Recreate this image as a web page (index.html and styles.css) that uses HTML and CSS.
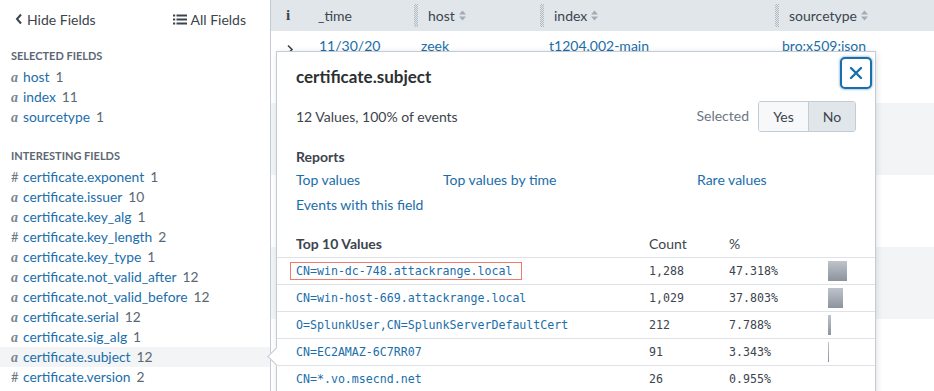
FILE: index.html
```html
<!DOCTYPE html>
<html lang="en">
<head>
  <meta charset="UTF-8" />
  <title>Search - Fields</title>
  <link rel="stylesheet" href="styles.css">
</head>
<body>
  <div class="app">
    <aside class="sidebar">
      <div class="side-top">
        <a class="side-link">
          <svg width="8" height="12" viewBox="0 0 8 12"><polyline points="6,1.5 2,6 6,10.5" fill="none" stroke="#3c444d" stroke-width="2"/></svg>
          Hide Fields
        </a>
        <a class="side-link">
          <svg width="14" height="11" viewBox="0 0 14 11"><rect x="0" y="0.5" width="2.2" height="2" fill="#3c444d"/><rect x="3.5" y="0.5" width="10.5" height="2" fill="#3c444d"/><rect x="0" y="4.5" width="2.2" height="2" fill="#3c444d"/><rect x="3.5" y="4.5" width="10.5" height="2" fill="#3c444d"/><rect x="0" y="8.5" width="2.2" height="2" fill="#3c444d"/><rect x="3.5" y="8.5" width="10.5" height="2" fill="#3c444d"/></svg>
          All Fields
        </a>
      </div>

      <h3 class="side-heading">Selected Fields</h3>
      <ul class="field-list">
        <li><span class="ftype str">a</span><a>host</a><span class="fcount">1</span></li>
        <li><span class="ftype str">a</span><a>index</a><span class="fcount">11</span></li>
        <li><span class="ftype str">a</span><a>sourcetype</a><span class="fcount">1</span></li>
      </ul>

      <h3 class="side-heading interesting">Interesting Fields</h3>
      <ul class="field-list">
        <li><span class="ftype">#</span><a>certificate.exponent</a><span class="fcount">1</span></li>
        <li><span class="ftype str">a</span><a>certificate.issuer</a><span class="fcount">10</span></li>
        <li><span class="ftype str">a</span><a>certificate.key_alg</a><span class="fcount">1</span></li>
        <li><span class="ftype">#</span><a>certificate.key_length</a><span class="fcount">2</span></li>
        <li><span class="ftype str">a</span><a>certificate.key_type</a><span class="fcount">1</span></li>
        <li><span class="ftype str">a</span><a>certificate.not_valid_after</a><span class="fcount">12</span></li>
        <li><span class="ftype str">a</span><a>certificate.not_valid_before</a><span class="fcount">12</span></li>
        <li><span class="ftype str">a</span><a>certificate.serial</a><span class="fcount">12</span></li>
        <li><span class="ftype str">a</span><a>certificate.sig_alg</a><span class="fcount">1</span></li>
        <li class="active"><span class="ftype str">a</span><a>certificate.subject</a><span class="fcount">12</span></li>
        <li><span class="ftype">#</span><a>certificate.version</a><span class="fcount">2</span></li>
      </ul>
    </aside>

    <main class="events">
      <div class="ev-head">
        <div class="hcell first">i</div>
        <div class="hcell time">_time</div>
        <div class="hcell"><span class="grip"></span><span class="htext">host</span>
          <svg class="sort" width="7" height="11" viewBox="0 0 7 11"><path d="M3.5 0.5 L7 4.5 L0 4.5 Z M3.5 10.5 L7 6.5 L0 6.5 Z" fill="#a3abb4"/></svg></div>
        <div class="hcell"><span class="grip"></span><span class="htext">index</span>
          <svg class="sort" width="7" height="11" viewBox="0 0 7 11"><path d="M3.5 0.5 L7 4.5 L0 4.5 Z M3.5 10.5 L7 6.5 L0 6.5 Z" fill="#a3abb4"/></svg></div>
        <div class="hcell"><span class="grip"></span><span class="htext">sourcetype</span>
          <svg class="sort" width="7" height="11" viewBox="0 0 7 11"><path d="M3.5 0.5 L7 4.5 L0 4.5 Z M3.5 10.5 L7 6.5 L0 6.5 Z" fill="#a3abb4"/></svg></div>
      </div>

      <div class="ev-body">
        <div class="ev-row">
          <div class="cell first">
            <svg width="8" height="11" viewBox="0 0 8 11"><polyline points="2,1.5 6,5.5 2,9.5" fill="none" stroke="#3c444d" stroke-width="1.6"/></svg>
          </div>
          <div class="cell"><a>11/30/20</a></div>
          <div class="cell"><a>zeek</a></div>
          <div class="cell idx"><a>t1204.002-main</a></div>
          <div class="cell"><a>bro:x509:json</a></div>
        </div>
        <div class="ev-row"></div>
        <div class="ev-row"></div>
        <div class="ev-row"></div>
        <div class="ev-row"></div>
      </div>

      <div class="popup">
        <span class="popup-arrow"></span>
        <div class="popup-head">
          <h2 class="popup-title">certificate.subject</h2>
          <button class="close-btn">
            <svg width="14" height="14" viewBox="0 0 14 14"><path d="M2 2 L12 12 M12 2 L2 12" stroke="#1a6eaa" stroke-width="2.4" stroke-linecap="round"/></svg>
          </button>
        </div>

        <div class="summary">
          <span>12 Values, 100% of events</span>
          <div class="selected">
            <span class="sel-label">Selected</span>
            <div class="toggle">
              <button class="tog yes">Yes</button>
              <button class="tog no">No</button>
            </div>
          </div>
        </div>

        <div class="reports">
          <h4>Reports</h4>
          <div class="report-links">
            <a>Top values</a>
            <a>Top values by time</a>
            <a>Rare values</a>
            <a>Events with this field</a>
          </div>
        </div>

        <table class="top-values">
          <thead>
            <tr><th class="val">Top 10 Values</th><th>Count</th><th>%</th><th></th></tr>
          </thead>
          <tbody>
            <tr><td class="val"><a class="marked">CN=win-dc-748.attackrange.local</a></td><td>1,288</td><td>47.318%</td><td><div class="bar" style="width: 19px"></div></td></tr>
            <tr><td class="val"><a>CN=win-host-669.attackrange.local</a></td><td>1,029</td><td>37.803%</td><td><div class="bar" style="width: 15px"></div></td></tr>
            <tr><td class="val"><a>O=SplunkUser,CN=SplunkServerDefaultCert</a></td><td>212</td><td>7.788%</td><td><div class="bar" style="width: 3px"></div></td></tr>
            <tr><td class="val"><a>CN=EC2AMAZ-6C7RR07</a></td><td>91</td><td>3.343%</td><td><div class="bar" style="width: 1px"></div></td></tr>
            <tr><td class="val"><a>CN=*.vo.msecnd.net</a></td><td>26</td><td>0.955%</td><td><div class="bar" style="width: 0px"></div></td></tr>
          </tbody>
        </table>
      </div>
    </main>
  </div>
</body>
</html>
```

FILE: styles.css
```css
* {
  box-sizing: border-box;
  margin: 0;
  padding: 0;
}

body {
  font-family: Lato, 'Open Sans', sans-serif;
  font-size: 14px;
  color: #3c444d;
  background: white;
  overflow: hidden;
  height: 391px;
}

a {
  color: #1a6eaa;
  text-decoration: none;
}

.app {
  display: flex;
  height: 391px;
}

/* sidebar */
.sidebar {
  width: 271px;
  flex-shrink: 0;
  border-right: 1px solid #c3cbd4;
}

.side-top {
  height: 38px;
  display: flex;
  align-items: center;
  justify-content: space-between;
  padding: 0 24px 0 15px;
}

.side-link {
  display: flex;
  align-items: center;
  gap: 4px;
  color: #3c444d;
  font-size: 14px;
}

.side-heading {
  font-size: 11px;
  font-weight: bold;
  text-transform: uppercase;
  color: #5c6773;
  line-height: 20px;
  margin-top: 8px;
  padding-left: 11px;
}

.side-heading.interesting {
  margin-top: 19px;
}

.field-list {
  list-style: none;
  margin-top: 1px;
}

.field-list li {
  display: flex;
  align-items: baseline;
  height: 20px;
  line-height: 20px;
  padding-left: 11px;
  font-size: 13.8px;
}

.field-list li.active {
  background: #f2f4f5;
}

.ftype {
  width: 12px;
  color: #6b7785;
  font-size: 13px;
}

.ftype.str {
  font-family: 'Liberation Serif', serif;
  font-style: italic;
  font-weight: bold;
  font-size: 14px;
  color: #7a8591;
}

.fcount {
  margin-left: 6px;
  color: #5c6773;
}

/* events table */
.events {
  flex: 1;
  position: relative;
}

.ev-head,
.ev-row {
  display: grid;
  grid-template-columns: 39px 102px 126px 235px 1fr;
}

.ev-head {
  height: 31px;
  background: #e1e6eb;
  align-items: center;
}

.hcell {
  display: flex;
  align-items: center;
}

.hcell.first {
  padding-left: 15px;
  font-family: 'Liberation Serif', serif;
  font-weight: bold;
  font-size: 15px;
}

.hcell.time {
  padding-left: 8px;
}

.grip {
  width: 4px;
  height: 23px;
  margin-left: 2px;
  background: repeating-conic-gradient(#b3bac2 0 25%, transparent 0 50%) 0 0 / 2px 2px;
}

.htext {
  margin-left: 10px;
}

.sort {
  margin-left: 4px;
}

.ev-row {
  height: 72px;
  padding-top: 5px;
  line-height: 20px;
}

.ev-row:nth-child(even) {
  background: #f2f4f5;
}

.cell {
  padding-left: 9px;
}

.cell.first {
  padding-left: 15px;
  padding-top: 4px;
}

.cell.idx {
  padding-left: 11px;
}

/* field summary popup */
.popup {
  position: absolute;
  left: 5px;
  top: 51px;
  width: 600px;
  height: 360px;
  background: white;
  border: 1px solid #c3cbd4;
  box-shadow: 1px 1px 6px rgba(0, 0, 0, 0.12);
}

.popup-arrow {
  position: absolute;
  left: -7px;
  top: 298px;
  width: 13px;
  height: 13px;
  background: white;
  border-left: 1px solid #c3cbd4;
  border-bottom: 1px solid #c3cbd4;
  transform: rotate(45deg);
}

.popup-head {
  display: flex;
  justify-content: space-between;
  align-items: flex-start;
  padding: 5px 3px 0 19px;
}

.popup-title {
  margin-top: 10px;
  font-size: 17px;
  line-height: 20px;
  color: #2b3033;
}

.close-btn {
  width: 32px;
  height: 32px;
  display: flex;
  align-items: center;
  justify-content: center;
  background: white;
  border: 2px solid #1a6eaa;
  border-radius: 5px;
  box-shadow: 0 0 2px 1px rgba(26, 110, 170, 0.35);
}

.summary {
  display: flex;
  justify-content: space-between;
  align-items: center;
  margin-top: 12px;
  padding: 0 19px;
}

.selected {
  display: flex;
  align-items: center;
  gap: 9px;
}

.sel-label {
  color: #6b7785;
  margin-top: -2px;
}

.toggle {
  display: flex;
  height: 31px;
  border: 1px solid #c3cbd4;
  border-radius: 3px;
  overflow: hidden;
}

.tog {
  font-family: Lato, sans-serif;
  font-size: 14px;
  color: #3c444d;
  border: none;
  background: #f7f8fa;
  width: 49px;
}

.tog.no {
  width: 47px;
  background: #e1e6eb;
  border-left: 1px solid #c3cbd4;
}

.reports {
  margin-top: 15px;
  padding: 0 19px;
}

.reports h4 {
  font-size: 14px;
  line-height: 20px;
}

.report-links {
  display: grid;
  grid-template-columns: 147px 254px auto;
  row-gap: 5px;
  margin-top: 3px;
  line-height: 20px;
}

.top-values {
  width: 100%;
  margin-top: 16px;
  border-collapse: collapse;
}

.top-values th {
  height: 26px;
  text-align: left;
  font-weight: normal;
  border-bottom: 1px solid #dfe3e8;
}

.top-values th.val {
  font-weight: bold;
}

.top-values td {
  height: 27px;
  border-bottom: 1px solid #dfe3e8;
  font-family: 'DejaVu Sans Mono', monospace;
  font-size: 11.6px;
  color: #3c444d;
}

.top-values .val {
  padding-left: 19px;
  width: 372px;
}

.top-values th:nth-child(2),
.top-values td:nth-child(2) {
  width: 80px;
}

.top-values th:nth-child(3),
.top-values td:nth-child(3) {
  width: 99px;
}

.marked {
  padding: 1px 9px 1px 5px;
  margin-left: -6px;
  border: 1.5px solid #ef7b6a;
}

.bar {
  height: 20px;
  background: linear-gradient(#bfc4cb, #8b939d);
}
```
